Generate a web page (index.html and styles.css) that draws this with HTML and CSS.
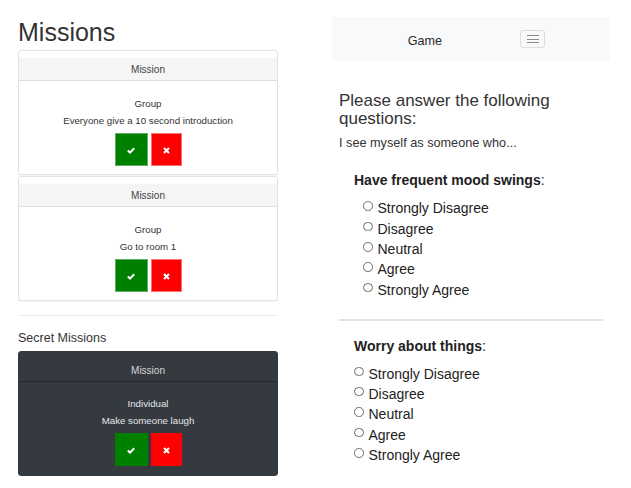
FILE: index.html
```html
<!DOCTYPE html>
<html>
<head>
<meta charset="utf-8">
<link rel="stylesheet" href="styles.css">
</head>
<body>
<div class="page">
  <div class="left">
    <h2 class="title">Missions</h2>
    <div class="card">
      <div class="card-header">Mission</div>
      <div class="card-body">
        <div class="line">Group</div>
        <div class="line">Everyone give a 10 second introduction</div>
        <div class="actions">
          <button class="btn btn-ok"><svg width="8" height="7" viewBox="0 0 8 7"><path d="M0.8 3.6 L3 5.6 L7.2 1.2" fill="none" stroke="#fff" stroke-width="2"/></svg></button>
          <button class="btn btn-no"><svg width="7" height="7" viewBox="0 0 7 7"><path d="M1 1 L6 6 M6 1 L1 6" fill="none" stroke="#fff" stroke-width="2"/></svg></button>
        </div>
      </div>
    </div>
    <div class="card card-next">
      <div class="card-header">Mission</div>
      <div class="card-body">
        <div class="line">Group</div>
        <div class="line">Go to room 1</div>
        <div class="actions">
          <button class="btn btn-ok"><svg width="8" height="7" viewBox="0 0 8 7"><path d="M0.8 3.6 L3 5.6 L7.2 1.2" fill="none" stroke="#fff" stroke-width="2"/></svg></button>
          <button class="btn btn-no"><svg width="7" height="7" viewBox="0 0 7 7"><path d="M1 1 L6 6 M6 1 L1 6" fill="none" stroke="#fff" stroke-width="2"/></svg></button>
        </div>
      </div>
    </div>
    <hr class="sep">
    <div class="subtitle">Secret Missions</div>
    <div class="card card-dark">
      <div class="card-header">Mission</div>
      <div class="card-body">
        <div class="line">Individual</div>
        <div class="line">Make someone laugh</div>
        <div class="actions">
          <button class="btn btn-ok"><svg width="8" height="7" viewBox="0 0 8 7"><path d="M0.8 3.6 L3 5.6 L7.2 1.2" fill="none" stroke="#fff" stroke-width="2"/></svg></button>
          <button class="btn btn-no"><svg width="7" height="7" viewBox="0 0 7 7"><path d="M1 1 L6 6 M6 1 L1 6" fill="none" stroke="#fff" stroke-width="2"/></svg></button>
        </div>
      </div>
    </div>
  </div>

  <div class="right">
    <nav class="navbar">
      <span class="brand">Game</span>
      <button class="toggler"><span class="bar"></span><span class="bar"></span><span class="bar"></span></button>
    </nav>
    <div class="content">
      <h4 class="prompt">Please answer the following questions:</h4>
      <p class="lead">I see myself as someone who...</p>
      <div class="question">
        <div class="q-title"><b>Have frequent mood swings</b>:</div>
        <div class="options options-indent">
          <label class="opt"><input type="radio" name="q1"><span>Strongly Disagree</span></label>
          <label class="opt"><input type="radio" name="q1"><span>Disagree</span></label>
          <label class="opt"><input type="radio" name="q1"><span>Neutral</span></label>
          <label class="opt"><input type="radio" name="q1"><span>Agree</span></label>
          <label class="opt"><input type="radio" name="q1"><span>Strongly Agree</span></label>
        </div>
      </div>
      <hr class="q-sep">
      <div class="question question-2">
        <div class="q-title"><b>Worry about things</b>:</div>
        <div class="options">
          <label class="opt"><input type="radio" name="q2"><span>Strongly Disagree</span></label>
          <label class="opt"><input type="radio" name="q2"><span>Disagree</span></label>
          <label class="opt"><input type="radio" name="q2"><span>Neutral</span></label>
          <label class="opt"><input type="radio" name="q2"><span>Agree</span></label>
          <label class="opt"><input type="radio" name="q2"><span>Strongly Agree</span></label>
        </div>
      </div>
    </div>
  </div>
</div>
</body>
</html>
```
FILE: styles.css
```css
* { box-sizing: border-box; }
html, body { margin: 0; padding: 0; background: #fff; }
body {
  font-family: "Liberation Sans", Arial, sans-serif;
  color: #333;
}
.page {
  display: flex;
  align-items: flex-start;
  padding: 17px 0 0 18px;
}
.left { width: 260px; }
.right { width: 278px; margin-left: 54px; }

.title {
  font-size: 25px;
  line-height: 30px;
  font-weight: normal;
  margin: 0 0 3px;
  color: #333;
}
.card {
  border: 1px solid #e2e2e2;
  border-radius: 3px;
  padding-top: 7px;
  text-align: center;
  background: #fff;
  box-shadow: 0 1px 1px rgba(0,0,0,0.04);
}
.card-next { margin-top: 1px; }
.card-header {
  background: #f5f5f5;
  border-bottom: 1px solid #e0e0e0;
  font-size: 10px;
  line-height: 15px;
  padding: 4px 0 3px;
  color: #444;
}
.card-body {
  padding: 13.5px 0 8px;
  font-size: 9.7px;
  line-height: 17px;
  color: #333;
}
.actions {
  display: flex;
  justify-content: center;
  gap: 3px;
  margin-top: 4.5px;
}
.btn {
  height: 33px;
  padding: 0;
  display: flex;
  align-items: center;
  justify-content: center;
  cursor: pointer;
}
.btn svg { display: block; margin-top: 2px; }
.btn-ok { width: 33px; background: #008000; border: 1px solid #5fae5f; }
.btn-no { width: 31px; background: #ff0000; border: 1px solid #ff7070; }

.sep {
  border: 0;
  border-top: 1px solid #ececec;
  margin: 14px 0 12.5px;
}
.subtitle {
  font-size: 12.5px;
  line-height: 18px;
  margin-bottom: 4.5px;
  color: #333;
}
.card-dark {
  background: #343a40;
  border-color: #343a40;
}
.card-dark .card-header {
  background: #343a40;
  border-bottom: 1px solid #25292d;
  color: #d4d6d8;
}
.card-dark .card-body { color: #e4e6e8; padding-top: 12.5px; padding-bottom: 9px; }
.card-dark .btn-ok { border-color: #008000; }
.card-dark .btn-no { border-color: #ff0000; }

.navbar {
  height: 44px;
  background: #f8f9fa;
  display: flex;
  align-items: center;
  padding-left: 75.7px;
}
.brand {
  font-size: 12.6px;
  color: #2a2a2a;
  margin-top: 3px;
}
.toggler {
  margin-left: 78.5px;
  width: 25px;
  height: 18px;
  border: 1px solid #dcdcdc;
  border-radius: 3px;
  background: #f8f9fa;
  padding: 0;
  display: flex;
  flex-direction: column;
  align-items: center;
  justify-content: center;
  gap: 2.5px;
}
.bar {
  display: block;
  width: 12px;
  height: 1px;
  background: #8a8a8a;
}
.content { padding: 0 7px; color: #212529; }
.prompt {
  font-size: 17px;
  line-height: 17.5px;
  font-weight: normal;
  margin: 31px 0 0;
  color: #333;
}
.lead {
  font-size: 12.7px;
  line-height: 17px;
  margin: 7.5px 0 0;
  color: #333;
}
.question { padding-left: 15px; }
.q-title {
  font-size: 14px;
  line-height: 20px;
  margin-top: 18px;
  color: #222;
}
.q-title b { font-weight: bold; }
.options { margin-top: 8.75px; }
.options-indent { padding-left: 9px; }
.opt {
  display: flex;
  align-items: flex-start;
  font-size: 14px;
  line-height: 20.4px;
  color: #222;
}
.opt input {
  appearance: none;
  -webkit-appearance: none;
  width: 9.5px;
  height: 9.5px;
  border: 1px solid #6b6b6b;
  border-radius: 50%;
  margin: 3px 5px 0 0;
  background: #fff;
  flex: none;
}
.q-sep {
  border: 0;
  border-top: 2px solid #e2e2e2;
  margin: 19px 0 0;
}
.question-2 .q-title { margin-top: 14.5px; }
.question-2 .options { margin-top: 7.8px; }
```
